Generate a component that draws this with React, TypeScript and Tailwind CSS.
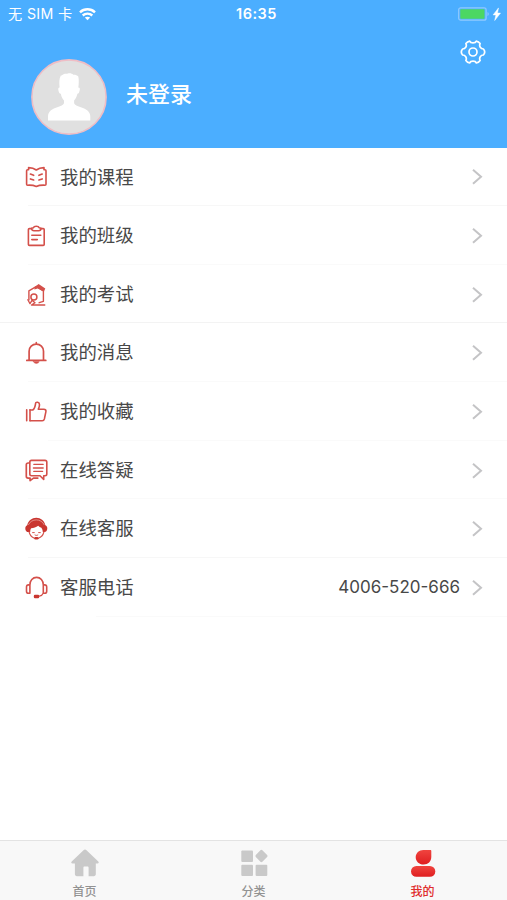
import type { ReactNode } from "react";

type MenuItem = {
  label: string;
  icon: ReactNode;
  value?: string;
  line: string;
};

const Icon = ({ children }: { children: ReactNode }) => (
  <svg
    className="h-6 w-6 shrink-0 text-[#d4504a]"
    viewBox="0 0 24 24"
    fill="none"
    stroke="currentColor"
    strokeWidth="1.6"
    strokeLinecap="round"
    strokeLinejoin="round"
  >
    {children}
  </svg>
);

const items: MenuItem[] = [
  {
    label: "我的课程",
    line: "ml-7 w-full bg-[#f7f7f7]",
    icon: (
      <Icon>
        <path d="M12.3 5C10.2 3.4 7.6 2.6 4.6 2.6v2.2H3.6c-.6 0-1 .4-1 1v13.4c0 .6.4 1 1 1 3.5-.2 6.2.1 8.7 1.3 2.5-1.2 5.2-1.5 8.7-1.3.6 0 1-.4 1-1V5.8c0-.6-.4-1-1-1h-1V2.6c-3 0-5.6.8-7.7 2.4z" />
        <path d="M6.4 9l3.3 1.3M6.4 13.9l3.3 1.1M18.2 9l-3.3 1.3M18.2 13.9l-3.3 1.1" />
      </Icon>
    ),
  },
  {
    label: "我的班级",
    line: "ml-7 w-full bg-[#fafafa]",
    icon: (
      <Icon>
        <path d="M7.6 4.6H5.4c-.6 0-1 .4-1 1v14.8c0 .6.4 1 1 1h13.8c.6 0 1-.4 1-1V5.6c0-.6-.4-1-1-1H17" />
        <path d="M7.6 4.2l1.8-.5c.6-1.9 5.2-1.9 5.8 0l1.8.5c0 1.8-1 2.5-2.4 2.5H10c-1.4 0-2.4-.7-2.4-2.5z" />
        <path d="M7.8 11.2h9M7.8 15.6h5.5" />
      </Icon>
    ),
  },
  {
    label: "我的考试",
    line: "w-full bg-[#f3f3f3]",
    icon: (
      <Icon>
        <path d="M4.9 17V7.8l7.6-4.4 6.9 4.6v10.3l-4.2 1.4" strokeWidth="1.4" />
        <path d="M10.5 4.2l4.1-3.3 6.7 4.6-1.4 3.3-6.2-3.3-3.3 1.1z" fill="currentColor" stroke="none" />
        <circle cx="9.9" cy="13.9" r="3" strokeWidth="1.5" />
        <path d="M3.8 16.7l2.2 3.9 2-3.2M8.6 17.8l2.4 2-3.6 2.2h13.4" strokeWidth="1.3" />
      </Icon>
    ),
  },
  {
    label: "我的消息",
    line: "ml-7 w-full bg-[#fafafa]",
    icon: (
      <Icon>
        <path d="M2.8 19.4h19M5.1 19.2v-9c0-4.1 3.2-7.1 7.2-7.1s7.2 3 7.2 7.1v9M12.3 1.7V3" strokeWidth="1.7" />
        <path d="M9.4 20.6h5.8c-.5 2.4-5.3 2.4-5.8 0z" fill="currentColor" strokeWidth=".5" />
      </Icon>
    ),
  },
  {
    label: "我的收藏",
    line: "ml-12 w-full bg-[#fafafa]",
    icon: (
      <Icon>
        <path d="M2.7 9.8v11M6 9.8v11" />
        <path d="M6 10h2.7c2.2-1.5 2.6-4.1 2.9-6.7.2-1.7 3.9-1.5 3.9 1.5 0 1.9-.5 3.1-1.2 4.4h5.6c1.4 0 2.3 1 2 2.4l-1.5 7.3c-.3 1.2-1 1.9-2.2 1.9H6" />
      </Icon>
    ),
  },
  {
    label: "在线答疑",
    line: "ml-7 w-full bg-[#fafafa]",
    icon: (
      <Icon>
        <path d="M7.5 1.4H21c1 0 1.8.7 1.8 1.7v11.9c0 1-.8 1.7-1.8 1.7h-1.3v3.8L16 16.7H7.5c-1 0-1.7-.7-1.7-1.7V3.1c0-1 .7-1.7 1.7-1.7z" />
        <path d="M5.5 4H4.2c-1 0-1.9.8-1.9 1.8v11.5c0 1 .8 1.8 1.8 1.8h2v2.5l3.4-2.5h4.3" strokeWidth="1.7" />
        <path d="M9.8 5.3h9.4M9.4 9h9.8M9.8 12.4h8.8" strokeWidth="1.3" />
      </Icon>
    ),
  },
  {
    label: "在线客服",
    line: "ml-7 w-full bg-[#f7f7f7]",
    icon: (
      <Icon>
        <path
          d="M3.2 8.2C4.4 3.6 7.9.8 12.3.8s7.9 2.8 9.1 7.4c1.2.5 1.9 1.5 1.9 3.1 0 2.2-1.1 3.7-2.9 3.8h-1.6c0-1.5-.5-2.9-1.4-4.3-1.3-.3-2.4-1-3.2-2.1-2.1 1.7-4.5 2.4-7 2.6-.8 1.1-1 2.4-1 3.8H4.3c-1.8-.1-3-1.6-3-3.7 0-1.6.7-2.6 1.9-3.2z"
          fill="#c93630"
          stroke="none"
        />
        <path d="M4.5 7.6c2.8-6.4 12.8-6.4 15.6 0" stroke="#eeb0ac" strokeWidth=".7" />
        <path d="M5.1 15c.7 2.8 2.3 4.9 4.8 5.9M19.9 15c-.8 3.1-2.6 5.2-5.6 6.2" strokeWidth="1.1" />
        <path d="M8.6 15.6h1.7M14.6 15.6h1.7M11 18c.9.6 1.9.6 2.8 0" strokeWidth="1" />
        <rect x="10.2" y="20" width="4.4" height="2.6" rx="1.3" fill="#c93630" stroke="none" />
      </Icon>
    ),
  },
  {
    label: "客服电话",
    value: "4006-520-666",
    line: "ml-24 w-full bg-[#fafafa]",
    icon: (
      <Icon>
        <path d="M5.9 9v8.3H4.6c-1.3 0-2.1-1-2.1-2.1V11c0-1.2.9-2.1 2.1-2.1h1.3c0-4.2 2.8-7.5 6.7-7.5s6.7 3.3 6.7 7.5h1.3c1.2 0 2.1.9 2.1 2.1v4.2c0 1.1-.8 2.1-2.1 2.1h-1.3V9" />
        <path d="M19 17.5c-.6 1.6-1.8 2.5-3.7 2.7" strokeWidth="1.2" />
        <rect x="9.8" y="18.8" width="5.4" height="3.5" rx="1.2" fill="#c93630" stroke="none" />
      </Icon>
    ),
  },
];

const StatusBar = () => (
  <div className="grid h-7 grid-cols-3 items-center pl-2 pr-1 text-[15px] leading-7">
    <div className="flex items-center">
      <span className="w-[71px] whitespace-nowrap text-[14.2px] tracking-[0.35px]">无 SIM 卡</span>
      <svg className="h-[13px] w-[17px]" viewBox="0 0 17 13" fill="none" stroke="white" strokeWidth="2.4">
        <path d="M1 4.3c4.2-4 10.8-4 15 0M3.7 7.5c2.7-2.5 6.9-2.5 9.6 0" />
        <path d="M8.5 12.3L5.8 9.6c1.5-1.3 3.9-1.3 5.4 0z" fill="white" stroke="none" />
      </svg>
    </div>
    <span className="pl-[2px] text-center text-[14.5px] font-semibold tracking-[0.5px]">16:35</span>
    <div className="flex items-center justify-end">
      <svg className="mb-px h-[14px] w-[45px]" viewBox="0 0 45 14">
        <rect x=".7" y=".8" width="27.4" height="12.4" rx="2" fill="none" stroke="#91caff" strokeWidth="1.2" />
        <rect x="2.3" y="2.3" width="24.2" height="9.4" rx=".8" fill="#4cd763" />
        <path d="M29.5 5v4c1.7-.6 1.7-3.4 0-4z" fill="#91caff" />
        <path d="M40.5.9l-5.4 7h2.8l-1.2 5.6 5.8-7.4h-3z" fill="white" stroke="white" strokeWidth=".5" />
      </svg>
    </div>
  </div>
);

const Avatar = () => (
  <svg className="h-[76px] w-[76px] shrink-0" viewBox="0 0 76 76">
    <circle cx="38" cy="38" r="37.1" fill="#e0e0e0" stroke="#efbdc5" strokeWidth="1.6" />
    <path
      d="M28.6 28.5c-.5-4.5-.5-9 1.2-11.9 1.2-.3 1.8-1.1 3.3-1.7 1.5-.5 2.4.2 3.6-.3 2.2-.8 4.2-.2 5.6 1.1 1.8-.2 3.8.4 5 1.7.7 3.2.6 7.3 0 11.1 1.6.2 1.8 1.2 1.4 2.7-.4 1.8-.9 3.5-2.3 3.6-.7 3.1-1.9 5.1-3.3 6.8v2.6c.7 2 3.4 3 6 3.7 6 1.6 10.2 4.4 10.2 9.7v3.9H17v-3.9c0-5.3 4-8.1 10-9.7 2.6-.7 5.3-1.7 6-3.7v-2.6c-1.4-1.7-2.6-3.7-3.2-6.8-1.4-.1-2.1-1.8-2.4-3.6-.3-1.5-.2-2.5 1.2-2.7z"
      fill="white"
    />
  </svg>
);

const Gear = () => (
  <svg className="h-[26px] w-[26px]" viewBox="0 0 26 26" fill="none" stroke="white" strokeWidth="1.7" strokeLinejoin="round">
    <path d="M9.7 2.1C10.6 4.5 15.4 4.5 16.3 2.1Q18.6 2.5 20.1 4.6C18.8 7.2 20.7 10 23.4 10Q26 13 23.4 16C20.7 16 18.8 18.8 20.1 21.4Q18.6 23.5 16.3 23.9C15.4 21.5 10.6 21.5 9.7 23.9Q7.4 23.5 5.9 21.4C7.2 18.8 5.3 16 2.6 16Q0 13 2.6 10C5.3 10 7.2 7.2 5.9 4.6Q7.4 2.5 9.7 2.1Z" />
    <circle cx="13" cy="13" r="4" />
  </svg>
);

const MenuRow = ({ item }: { item: MenuItem }) => (
  <button className="flex h-[58.65px] w-full flex-col overflow-hidden text-left">
    <span className="flex w-full flex-1 items-center pl-6 pr-6 pt-[2px]">
      {item.icon}
      <span className="ml-3 flex-1 text-[18.4px] text-[#484848]">{item.label}</span>
      {item.value && (
        <span className="mr-[11px] text-[17px] text-[#484848]">{item.value}</span>
      )}
      <svg className="h-4 w-3" viewBox="0 0 12 16" fill="none" stroke="#c4c4c6" strokeWidth="2">
        <path d="M2 .8l8 7-8 7" />
      </svg>
    </span>
    <span className={`h-px shrink-0 ${item.line}`} />
  </button>
);

const TabBar = () => (
  <nav className="grid h-[60px] grid-cols-3 border-t-[1.5px] border-[#e3e3e3] bg-[#f8f8f8] text-[12px] font-medium leading-4 text-[#929292]">
    <button className="flex flex-col items-center gap-[6px] pt-[7px]">
      <svg className="h-[30px] w-[30px]" viewBox="0 0 30 30" fill="#c9c9c9">
        <path d="M13.5 2.2c.9-.8 2.1-.8 3 0l11.8 11.4c.9.9.4 2-.8 2h-1.7v10.5c0 1.4-.7 2.1-2.1 2.1h-5.1v-8.5c0-.8-.4-1.2-1.2-1.2h-2.8c-.8 0-1.2.4-1.2 1.2v8.5H7c-1.4 0-2.1-.7-2.1-2.1V15.6H2.5c-1.2 0-1.7-1.1-.8-2z" />
      </svg>
      首页
    </button>
    <button className="flex flex-col items-center gap-[6px] pt-[7px]">
      <svg className="h-[30px] w-[30px]" viewBox="0 0 30 30" fill="#c9c9c9">
        <rect x="2.3" y="2.6" width="11.7" height="11.3" rx="1" />
        <rect x="2.3" y="16.7" width="11.7" height="11.3" rx="1" />
        <rect x="16.6" y="16.7" width="11.7" height="11.3" rx="1" />
        <path d="M21.4 2.2q1-.8 2 0l4.7 4.9q.9 1 0 2l-4.7 4.7q-1 .8-2 0l-4.6-4.7q-.9-1 0-2z" />
      </svg>
      分类
    </button>
    <button className="flex flex-col items-center gap-[6px] pt-[7px] text-[#e02c2c]">
      <svg className="h-[30px] w-[30px]" viewBox="0 0 30 30">
        <defs>
          <linearGradient id="profile" x1="0" x2="0" y1="0" y2="1">
            <stop stopColor="#f0443f" />
            <stop offset="1" stopColor="#df1e20" />
          </linearGradient>
        </defs>
        <path d="M15.3 1.9h7c.6 0 1 .4 1 1V9c0 4.4-3.1 7.5-7.7 7.5S7.7 13.3 7.7 9.2s3.3-7.3 7.6-7.3z" fill="url(#profile)" />
        <rect x="3" y="18" width="24.3" height="10.8" rx="5.4" fill="url(#profile)" />
      </svg>
      我的
    </button>
  </nav>
);

export default function App() {
  return (
    <div className="flex h-[900px] w-[507px] flex-col overflow-hidden bg-white font-[Inter,'Noto_Sans_CJK_SC',sans-serif]">
      <header className="flex h-[147.5px] shrink-0 flex-col bg-[#4baeff] text-white">
        <StatusBar />
        <div className="flex flex-1 pl-[31px] pr-[21px] pt-[11px]">
          <div className="flex flex-1 items-start pt-5">
            <Avatar />
            <h1 className="ml-[19px] mt-[17px] text-[22px] font-medium leading-9">未登录</h1>
          </div>
          <Gear />
        </div>
      </header>
      <main className="flex-1">
        {items.map((item) => (
          <MenuRow key={item.label} item={item} />
        ))}
      </main>
      <TabBar />
    </div>
  );
}
